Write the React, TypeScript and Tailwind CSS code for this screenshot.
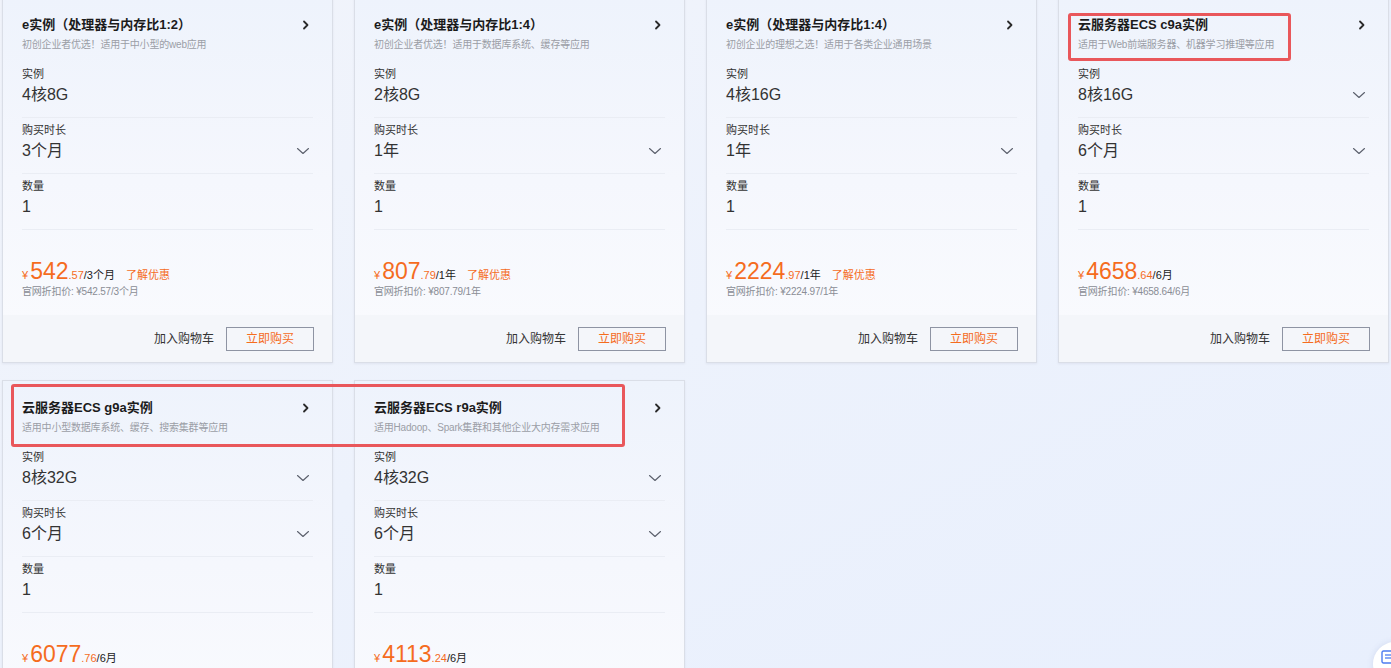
import React from "react";

type Field = { label: string; value: string; select?: boolean };
type Card = {
  title: string;
  sub: string;
  fields: Field[];
  yen: string;
  cents: string;
  unit: string;
  promo?: boolean;
};

const FONT = '"Liberation Sans", "Noto Sans CJK SC", Arial, sans-serif';

const cards: Card[] = [
  {
    title: "e实例（处理器与内存比1:2）",
    sub: "初创企业者优选！适用于中小型的web应用",
    fields: [
      { label: "实例", value: "4核8G" },
      { label: "购买时长", value: "3个月", select: true },
      { label: "数量", value: "1" },
    ],
    yen: "542",
    cents: ".57",
    unit: "/3个月",
    promo: true,
  },
  {
    title: "e实例（处理器与内存比1:4）",
    sub: "初创企业者优选！适用于数据库系统、缓存等应用",
    fields: [
      { label: "实例", value: "2核8G" },
      { label: "购买时长", value: "1年", select: true },
      { label: "数量", value: "1" },
    ],
    yen: "807",
    cents: ".79",
    unit: "/1年",
    promo: true,
  },
  {
    title: "e实例（处理器与内存比1:4）",
    sub: "初创企业的理想之选！适用于各类企业通用场景",
    fields: [
      { label: "实例", value: "4核16G" },
      { label: "购买时长", value: "1年", select: true },
      { label: "数量", value: "1" },
    ],
    yen: "2224",
    cents: ".97",
    unit: "/1年",
    promo: true,
  },
  {
    title: "云服务器ECS c9a实例",
    sub: "适用于Web前端服务器、机器学习推理等应用",
    fields: [
      { label: "实例", value: "8核16G", select: true },
      { label: "购买时长", value: "6个月", select: true },
      { label: "数量", value: "1" },
    ],
    yen: "4658",
    cents: ".64",
    unit: "/6月",
  },
  {
    title: "云服务器ECS g9a实例",
    sub: "适用中小型数据库系统、缓存、搜索集群等应用",
    fields: [
      { label: "实例", value: "8核32G", select: true },
      { label: "购买时长", value: "6个月", select: true },
      { label: "数量", value: "1" },
    ],
    yen: "6077",
    cents: ".76",
    unit: "/6月",
  },
  {
    title: "云服务器ECS r9a实例",
    sub: "适用Hadoop、Spark集群和其他企业大内存需求应用",
    fields: [
      { label: "实例", value: "4核32G", select: true },
      { label: "购买时长", value: "6个月", select: true },
      { label: "数量", value: "1" },
    ],
    yen: "4113",
    cents: ".24",
    unit: "/6月",
  },
];

function ChevronRight() {
  return (
    <svg width="8" height="10" viewBox="0 0 8 10" className="mr-[3px]">
      <polyline points="2,1.5 5.5,5 2,8.5" fill="none" stroke="#2a2a2a" strokeWidth="1.8" strokeLinecap="round" strokeLinejoin="round" />
    </svg>
  );
}

function ChevronDown() {
  return (
    <svg width="14" height="8" viewBox="0 0 14 8" className="mr-[3px]">
      <polyline points="1.5,1.5 7,6.5 12.5,1.5" fill="none" stroke="#5a5f6b" strokeWidth="1.1" strokeLinecap="round" strokeLinejoin="round" />
    </svg>
  );
}

function ProductCard({ c }: { c: Card }) {
  return (
    <div className="flex h-[366px] flex-col border border-[#dadee7] bg-gradient-to-b from-[#eef3fc] via-[#f5f7fd] to-[#fafbfe] shadow-[0_1px_2px_rgba(60,70,100,0.08)]">
      <div className="flex-1 px-[19px] pt-[18px]">
        <div className="flex h-[18px] items-center justify-between">
          <span className="text-[13px] font-bold leading-[18px] text-[#1b1b1b]">{c.title}</span>
          <ChevronRight />
        </div>
        <div className="mt-[4px] h-[14px] text-[10px] leading-[14px] tracking-[-0.2px] text-[#9b9ea6]">{c.sub}</div>
        <div className="mt-[10px]">
          {c.fields.map((f) => (
            <div key={f.label} className="border-b border-[#eaedf4] pb-[11px] pt-[4px]">
              <div className="h-[16px] text-[11px] leading-[16px] text-[#333]">{f.label}</div>
              <div className="mt-[2px] flex h-[22px] items-center justify-between">
                <span className="text-[16px] leading-[22px] text-[#333]">{f.value}</span>
                {f.select && <ChevronDown />}
              </div>
            </div>
          ))}
        </div>
        <div className="mt-[27px] flex h-[28px] items-baseline whitespace-nowrap">
          <span className="mr-[2px] text-[11px] text-[#f56c1e]">¥</span>
          <span className="text-[23px] leading-[28px] text-[#f56c1e]">{c.yen}</span>
          <span className="text-[11px] text-[#f56c1e]">{c.cents}</span>
          <span className="text-[11px] text-[#222]">{c.unit}</span>
          {c.promo && <span className="ml-[11px] text-[11px] text-[#f56c1e]">了解优惠</span>}
        </div>
        <div className="h-[14px] text-[10px] leading-[14px] tracking-[-0.2px] text-[#8a8d95]">
          官网折扣价: ¥{c.yen}
          {c.cents}
          {c.unit}
        </div>
      </div>
      <div className="flex h-[47px] items-center justify-end gap-[12px] bg-[#f4f6fa] pr-[18px]">
        <span className="text-[12px] text-[#333]">加入购物车</span>
        <button className="flex h-[24px] w-[88px] items-center justify-center border border-[#8e94a3] bg-transparent text-[12px] text-[#f56c1e]">
          立即购买
        </button>
      </div>
    </div>
  );
}

export default function App() {
  return (
    <div
      className="relative h-[668px] w-[1391px] overflow-hidden bg-gradient-to-br from-[#f1f4fb] via-[#edf2fc] to-[#e8effd]"
      style={{ fontFamily: FONT }}
    >
      <div className="mt-[-3px] grid grid-cols-[repeat(4,331px)] gap-x-[21px] gap-y-[17px] pl-[2px]">
        {cards.map((c, i) => (
          <ProductCard key={i} c={c} />
        ))}
      </div>

      <div className="pointer-events-none absolute left-[1068px] top-[13px] h-[48px] w-[223px] rounded-[3px] border-[3px] border-[#e9575b]" />
      <div className="pointer-events-none absolute left-[11px] top-[384px] h-[63px] w-[614px] rounded-[3px] border-[3px] border-[#e9575b]" />

      <div className="absolute left-[1373px] top-[642px] flex h-[44px] w-[44px] items-start rounded-full bg-white pl-[8px] pt-[8px] shadow-[0_0_6px_rgba(80,100,160,0.15)]">
        <svg width="14" height="14" viewBox="0 0 14 14">
          <rect x="1" y="1" width="12" height="12" rx="1.5" fill="none" stroke="#4d7cf0" strokeWidth="1.4" />
          <line x1="4" y1="5" x2="10" y2="5" stroke="#4d7cf0" strokeWidth="1.3" />
          <line x1="4" y1="8" x2="10" y2="8" stroke="#4d7cf0" strokeWidth="1.3" />
        </svg>
      </div>
    </div>
  );
}
